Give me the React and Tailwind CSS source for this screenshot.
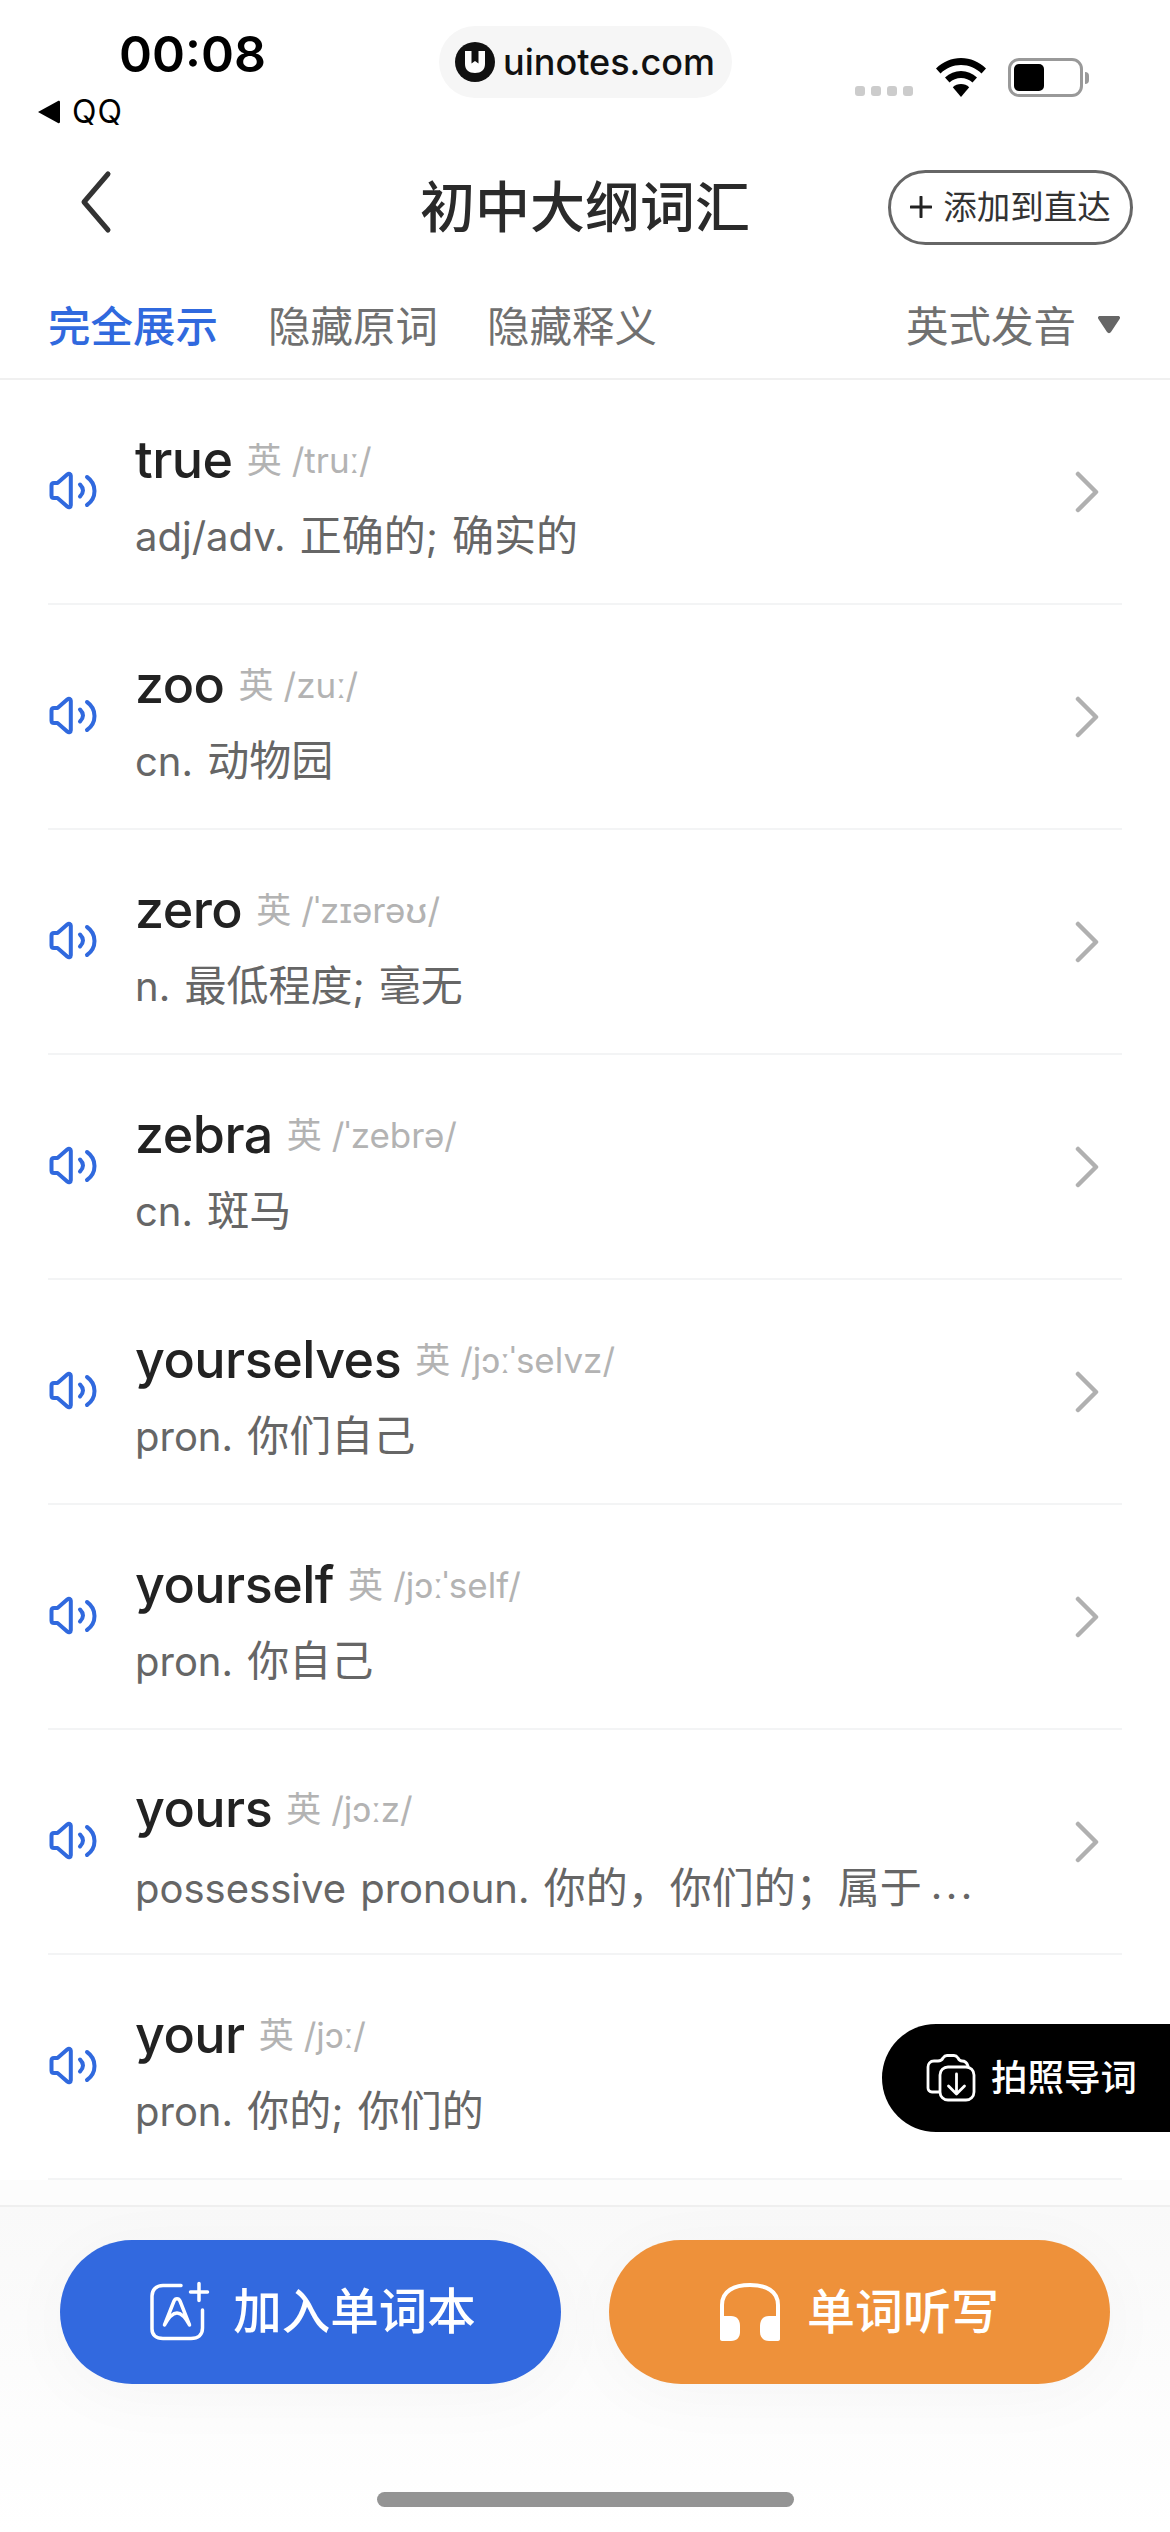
const words = [
  { word: "true", phonetic: "/truː/", meaning: "adj/adv. 正确的; 确实的" },
  { word: "zoo", phonetic: "/zuː/", meaning: "cn. 动物园" },
  { word: "zero", phonetic: "/ˈzɪərəʊ/", meaning: "n. 最低程度; 毫无" },
  { word: "zebra", phonetic: "/ˈzebrə/", meaning: "cn. 斑马" },
  { word: "yourselves", phonetic: "/jɔːˈselvz/", meaning: "pron. 你们自己" },
  { word: "yourself", phonetic: "/jɔːˈself/", meaning: "pron. 你自己" },
  { word: "yours", phonetic: "/jɔːz/", meaning: "possessive pronoun. 你的，你们的；属于..." },
  { word: "your", phonetic: "/jɔː/", meaning: "pron. 你的; 你们的" },
];

const fontStack = "font-['Inter','Noto_Sans_CJK_SC',sans-serif]";

function Speaker() {
  return (
    <svg width="48" height="40" viewBox="0 0 48 40" fill="none" stroke="#3069de" strokeWidth="4" strokeLinecap="round" strokeLinejoin="round">
      <path d="M2.500 14.500c0-1.500 1-2.500 2.500-2.500h3.500l10-8.700c1.400-1 3.300-.4 3.300 1.500v29.400c0 1.900-1.900 2.500-3.300 1.500L8.500 27H5c-1.500 0-2.500-1-2.500-2.500z" />
      <path d="M31 13.500c1.500 1.500 3 3.500 3 6s-1.500 4.500-3 6" />
      <path d="M38 6c5 3.500 7.500 8.500 7.500 14S43 30.500 38 34" />
    </svg>
  );
}

function Chevron() {
  return (
    <svg width="24" height="42" viewBox="0 0 24 42" fill="none" stroke="#b0b0b0" strokeWidth="4.500" strokeLinecap="round" strokeLinejoin="round">
      <path d="M3 3l18 18L3 39" />
    </svg>
  );
}

// CJK runs sit a little larger than the latin around them in the reference
function Meaning({ text }) {
  const parts = text.split(/([\u4e00-\u9fff，；]+|\.\.\.)/).filter(Boolean);
  return (
    <div className="mt-[18px] whitespace-nowrap text-[40px] leading-[50px] text-[#666666] [word-spacing:3px]">
      {parts.map((part, i) => {
        if (part === "...") {
          return (
            <span key={i} className="ml-[9px] align-[4px] text-[40px] tracking-[3.500px]">
              {part}
            </span>
          );
        }
        if (/[\u4e00-\u9fff，；]/.test(part)) {
          return (
            <span key={i} className="text-[42px]">
              {part}
            </span>
          );
        }
        return <span key={i}>{part}</span>;
      })}
    </div>
  );
}

function WordRow({ item }) {
  return (
    <div className="flex h-[225px] items-center border-b-2 border-[#f3f4f5]">
      <div className="w-[87px] shrink-0 pb-[2px] pl-[1px]">
        <Speaker />
      </div>
      <div className="min-w-0 flex-1 pt-[6px]">
        <div className="flex items-center">
          <span className="text-[52px] leading-[66px] font-medium tracking-[-0.5px] text-[#222222]">{item.word}</span>
          <span className="ml-[14px] text-[35px] leading-[40px] text-[#b3b3b3]">英</span>
          <span className="ml-[10px] text-[35px] leading-[40px] text-[#b3b3b3]">{item.phonetic}</span>
        </div>
        <Meaning text={item.meaning} />
      </div>
      <div className="mr-[23px] shrink-0">
        <Chevron />
      </div>
    </div>
  );
}

export default function App() {
  return (
    <div className={`relative flex h-[2532px] w-[1170px] flex-col overflow-hidden bg-white ${fontStack}`}>
      {/* Status bar */}
      <div className="flex h-[150px] shrink-0">
        <div className="w-[439px] shrink-0">
          <div className="pt-[24px] pl-[119px] text-[50px] leading-[60px] font-semibold text-black">00:08</div>
          <div className="mt-[9px] flex items-center pl-[38px]">
            <svg width="22" height="24" viewBox="0 0 22 24" fill="#000">
              <path d="M0 12L20 1c1-.5 2 0 2 1v20c0 1-1 1.500-2 1z" />
            </svg>
            <span className="ml-[12px] text-[32px] leading-[38px] tracking-[1px] text-black">QQ</span>
          </div>
        </div>
        <div className="mt-[26px] flex h-[72px] w-[293px] items-center rounded-full bg-[#f6f6f6] pl-[16px]">
          <svg width="40" height="40" viewBox="0 0 40 40">
            <circle cx="20" cy="20" r="20" fill="#111111" />
            <path d="M10 9h6.500v12.500l3.500-2.500 3.500 2.500V9H30v13c0 6-4 9-10 9s-10-3-10-9z" fill="#ffffff" />
          </svg>
          <span className="ml-[8px] text-[36px] leading-[44px] font-medium text-[#111111]">uinotes.com</span>
        </div>
        <div className="ml-[123px] flex h-[97px] items-end">
          <div className="mb-[1px] flex gap-[6px]">
            <div className="h-[10px] w-[10px] rounded-[3px] bg-[#cccccc]"></div>
            <div className="h-[10px] w-[10px] rounded-[3px] bg-[#cccccc]"></div>
            <div className="h-[10px] w-[10px] rounded-[3px] bg-[#cccccc]"></div>
            <div className="h-[10px] w-[10px] rounded-[3px] bg-[#cccccc]"></div>
          </div>
          <svg className="ml-[23px]" width="50" height="39" viewBox="0 0 50 39" fill="#000">
            <path d="M25 0c9.500 0 18 3.700 25 10.500l-4.500 5C40 10.200 33 7 25 7S10 10.200 4.500 15.500L0 10.500C7 3.700 15.500 0 25 0z" />
            <path d="M25 13c6 0 11.500 2.400 16 6.500l-4.500 5C33.300 21.500 29.300 20 25 20s-8.300 1.500-11.500 4.500L9 19.500C13.500 15.400 19 13 25 13z" />
            <path d="M25 26c3.200 0 6 1.200 8.200 3.200L25 39l-8.200-9.800C19 27.200 21.800 26 25 26z" />
          </svg>
          <div className="ml-[22px] flex items-center">
            <div className="h-[39px] w-[75px] rounded-[11px] border-[3px] border-[#999999] p-[3px]">
              <div className="h-full w-[30px] rounded-[5px] bg-black"></div>
            </div>
            <div className="ml-[2px] h-[12px] w-[4px] rounded-r-full bg-[#999999]"></div>
          </div>
        </div>
      </div>

      {/* Nav */}
      <div className="grid h-[114px] shrink-0 grid-cols-[1fr_auto_1fr] items-center">
        <div className="pb-[10px] pl-[80px]">
          <svg width="32" height="64" viewBox="0 0 32 64" fill="none" stroke="#333333" strokeWidth="5" strokeLinecap="round" strokeLinejoin="round">
            <path d="M28 4L4 32l24 28" />
          </svg>
        </div>
        <div className="text-[55px] leading-[64px] font-medium text-[#2a2a2a]">初中大纲词汇</div>
        <div className="flex justify-end pr-[37px]">
          <div className="flex h-[75px] w-[245px] items-center justify-center rounded-full border-[3px] border-[#666666]">
            <svg width="22" height="22" viewBox="0 0 22 22" stroke="#222222" strokeWidth="3" strokeLinecap="round">
              <path d="M11 1v20M1 11h20" />
            </svg>
            <span className="ml-[11px] text-[33.5px] leading-[40px] text-[#333333]">添加到直达</span>
          </div>
        </div>
      </div>

      {/* Tabs */}
      <div className="flex h-[116px] shrink-0 items-center border-b-2 border-[#f0f0f0] pt-[12px] pr-[50px] pl-[48px] text-[42.5px] leading-[50px] text-[#707070]">
        <span className="font-medium text-[#3069de]">完全展示</span>
        <span className="ml-[50px]">隐藏原词</span>
        <span className="ml-[49px]">隐藏释义</span>
        <span className="ml-auto">英式发音</span>
        <svg className="mb-[4px] ml-[22px]" width="22" height="18" viewBox="0 0 22 18" fill="#666666">
          <path d="M2 0h18c1.800 0 2.600 1.500 1.600 3L13 16c-1 1.500-3 1.500-4 0L.4 3C-.6 1.500.2 0 2 0z" />
        </svg>
      </div>

      {/* Word list */}
      <div className="shrink-0 pr-[48px] pl-[48px]">
        {words.map((item) => (
          <WordRow key={item.word} item={item} />
        ))}
      </div>

      <div className="h-[25px] shrink-0 bg-[#fcfcfc]"></div>

      {/* Bottom actions */}
      <div className="flex flex-1 flex-col border-t-2 border-[#efefef] bg-gradient-to-b from-[#f9f9f9] to-white">
        <div className="mt-[33px] flex justify-between pr-[60px] pl-[60px]">
          <div className="flex h-[144px] w-[501px] items-center justify-center rounded-full bg-[#3269df] pl-[3px] shadow-[0_10px_70px_rgba(0,0,0,0.03)]">
            <svg width="62" height="62" viewBox="0 0 62 62" fill="none" stroke="#ffffff" strokeWidth="3.500" strokeLinecap="round" strokeLinejoin="round">
              <path d="M33 4.500H15C8 4.500 4 9 4 15v33c0 6 4 9.500 11 9.500h28c7 0 11.500-3.500 11.500-10.500V29" />
              <path d="M16.500 44L26 20c1.200-3 4.800-3 6 0l9.500 24Q35 32 29 32T16.500 44z" />
              <path d="M51 2.500v17M42.500 11h17" />
            </svg>
            <span className="ml-[23px] text-[48.5px] leading-[58px] font-medium text-white">加入单词本</span>
          </div>
          <div className="flex h-[144px] w-[501px] items-center justify-center rounded-full bg-[#ee913a] shadow-[0_10px_70px_rgba(0,0,0,0.03)]">
            <svg width="60" height="58" viewBox="0 0 60 58" fill="none">
              <path d="M2 34V22C2 8 14 2 30 2s28 6 28 20v12" stroke="#ffffff" strokeWidth="4" />
              <path d="M0 33h11c6 0 9 4 9 10v6c0 5-3 9-9 9H2c-1 0-2-1-2-2z" fill="#ffffff" />
              <path d="M60 33H49c-6 0-9 4-9 10v6c0 5 3 9 9 9h9c1 0 2-1 2-2z" fill="#ffffff" />
            </svg>
            <span className="ml-[27px] text-[48px] leading-[58px] font-medium text-white">单词听写</span>
          </div>
        </div>
        <div className="mt-[108px] flex justify-center">
          <div className="h-[15px] w-[417px] rounded-full bg-[#949494]"></div>
        </div>
      </div>

      {/* Floating photo import */}
      <div className="absolute top-[2024px] right-0 flex h-[108px] w-[288px] items-center rounded-l-[54px] bg-black pl-[44px]">
        <svg width="50" height="50" viewBox="0 0 50 50" fill="none" stroke="#ffffff" strokeWidth="2.800" strokeLinecap="round" strokeLinejoin="round">
          <path d="M13.500 39H6c-2.500 0-4-2-4-4V14c0-3 2-6 6-6h4c2 0 4-1 5-3 1-1.500 2-2.500 4-2.500h7c2 0 3 1 4 2.500 1 2 2 3 4 3 3 0 5 2 6 5" />
          <rect x="14" y="14" width="34" height="33" rx="8" />
          <path d="M30.500 21v20M22.500 33l8 8 8-8" />
        </svg>
        <span className="ml-[15px] text-[36.5px] leading-[44px] font-medium text-white">拍照导词</span>
      </div>
    </div>
  );
}
